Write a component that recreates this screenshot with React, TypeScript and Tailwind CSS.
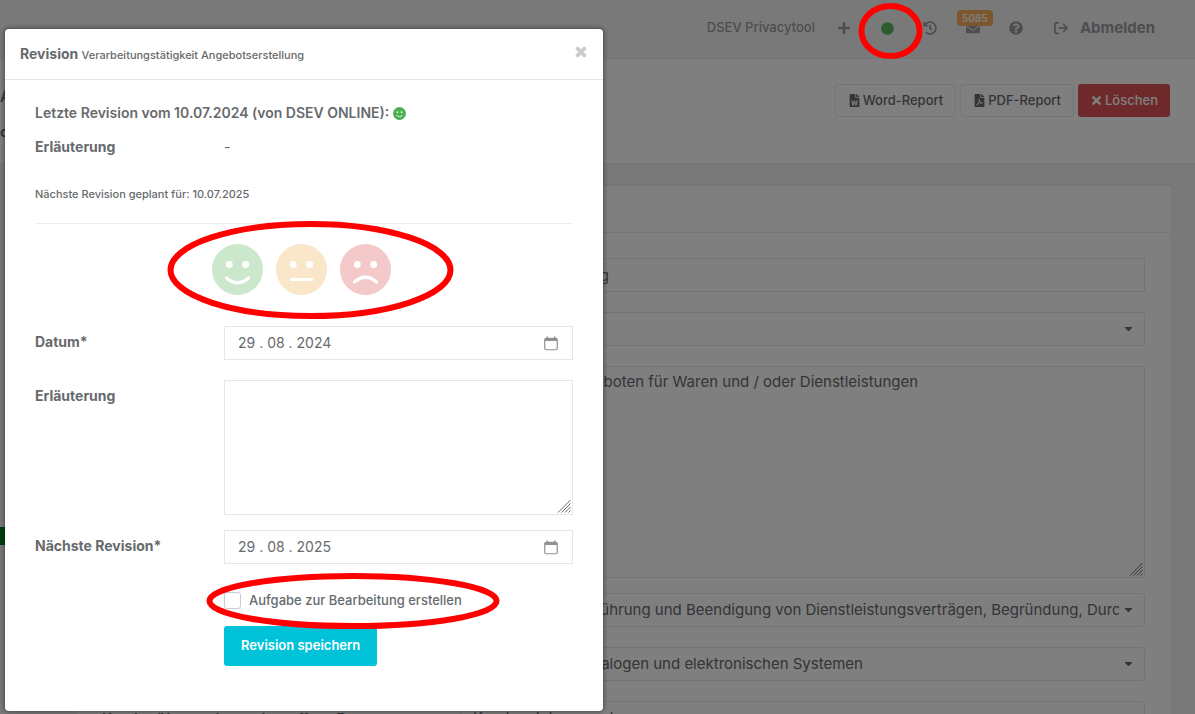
import { useState, FormEvent, ReactNode } from "react";
import {
    FaPlus,
    FaCircle,
    FaHistory,
    FaEnvelope,
    FaQuestionCircle,
    FaFileWord,
    FaFilePdf,
    FaTimes,
    FaCaretDown
} from "react-icons/fa";
import { FaArrowRightFromBracket } from "react-icons/fa6";

type Mood = "good" | "neutral" | "bad";

const MOUTHS: { [key in Mood]: string } = {
    good: "M14.5 34 Q25.5 43.5 36.5 34",
    neutral: "M15.5 35.5 H35.5",
    bad: "M14.5 38 Q25.5 28.5 36.5 38"
};

const MOODS: { id: Mood; label: string; color: string }[] = [
    { id: "good", label: "Gut", color: "text-[#cbe8cc]" },
    { id: "neutral", label: "Neutral", color: "text-[#fae6c8]" },
    { id: "bad", label: "Schlecht", color: "text-[#f3c9c9]" }
];

function Face({ mood, className }: { mood: Mood; className: string }) {
    return (
        <svg viewBox="0 0 51 51" className={className} aria-hidden="true">
            <circle cx="25.5" cy="25.5" r="25.5" fill="currentColor" />
            <circle cx="17.3" cy="20.5" r="3.4" fill="#fff" />
            <circle cx="33.7" cy="20.5" r="3.4" fill="#fff" />
            <path d={MOUTHS[mood]} fill="none" stroke="#fff" strokeWidth="3.2" strokeLinecap="round" />
        </svg>
    );
}

function Grip() {
    return (
        <svg viewBox="0 0 14 14" className="pointer-events-none absolute right-[2px] bottom-[2px] size-[14px]" aria-hidden="true">
            <path d="M1 13.5L13.5 1M4.5 13.5L13.5 4.5M8 13.5L13.5 8M11.5 13.5L13.5 11.5" fill="none" stroke="currentColor" strokeWidth="1" />
        </svg>
    );
}

function IconButton({ label, children }: { label: string; children: ReactNode }) {
    return (
        <button type="button" aria-label={label} className="relative flex h-8 w-[43px] items-center justify-center">
            {children}
        </button>
    );
}

function TopBar() {
    return (
        <header className="flex h-[59px] items-center justify-end border-b border-[#e7eaec] bg-[#f3f3f4] pr-10 pb-[2px] text-[#999c9e]">
            <span className="mr-2 text-[13px] font-medium">DSEV Privacytool</span>
            <IconButton label="Neu"><FaPlus size={14} /></IconButton>
            <IconButton label="Status"><FaCircle size={13} className="text-[#5cb85c]" /></IconButton>
            <IconButton label="Verlauf"><FaHistory size={14} /></IconButton>
            <IconButton label="Nachrichten">
                <FaEnvelope size={14} />
                <span className="absolute -top-[2px] left-[5px] rounded-sm bg-[#f8ac59] px-[5px] text-[10px] leading-4 font-semibold text-white">
                    5085
                </span>
            </IconButton>
            <IconButton label="Hilfe"><FaQuestionCircle size={14} /></IconButton>
            <a href="#logout" className="ml-4 flex items-center gap-3 text-[15px] font-bold">
                <FaArrowRightFromBracket size={14} />
                Abmelden
            </a>
        </header>
    );
}

function PageHeading() {
    return (
        <section className="flex h-[105px] items-start justify-between border-b border-[#e7eaec] bg-white pt-[25px] pr-[25px]">
            <div>
                <h1 className="text-base leading-6 font-medium">Angebotserstellung</h1>
                <p className="mt-[14px] text-sm font-bold">offen</p>
            </div>
            <div className="flex gap-1 text-[13px] font-medium">
                <button type="button" className="flex h-[33px] items-center gap-[2px] rounded-[3px] border border-[#e7eaec] px-3">
                    <FaFileWord size={13} />Word-Report
                </button>
                <button type="button" className="flex h-[33px] items-center gap-[2px] rounded-[3px] border border-[#e7eaec] px-3">
                    <FaFilePdf size={13} />PDF-Report
                </button>
                <button type="button" className="flex h-[33px] items-center gap-[2px] rounded-[3px] bg-[#dc5454] px-3 text-white">
                    <FaTimes size={13} />Löschen
                </button>
            </div>
        </section>
    );
}

function Row({ id, label, children }: { id: string; label: string; children: ReactNode }) {
    return (
        <div className="grid grid-cols-[358px_1fr] items-start">
            <label htmlFor={id} className="pt-2 text-sm font-bold">{label}</label>
            {children}
        </div>
    );
}

function SelectField({ id, options }: { id: string; options: string[] }) {
    return (
        <div className="relative">
            <select
                id={id}
                className="h-[34px] w-full appearance-none rounded-[3px] border border-[#e5e6e7] bg-white pr-[25px] pl-3 text-[15px]"
            >
                {options.map((option) => (
                    <option key={option}>{option}</option>
                ))}
            </select>
            <FaCaretDown size={13} className="pointer-events-none absolute top-[10px] right-[10px]" />
        </div>
    );
}

function ActivityForm() {
    return (
        <main className="flex bg-[#f3f3f4] pt-5 pr-[25px]">
            <nav aria-label="Bereiche" className="w-[77px] shrink-0 pt-[343px]">
                <a href="#bereich" aria-label="Bereich" className="block h-[18px] w-[52px] bg-[#00802a]"></a>
            </nav>
            <form className="grow border-t-2 border-[#e7eaec] bg-white">
                <div className="h-[47px] border-b border-[#e7eaec]"></div>
                <div className="flex flex-col gap-5 p-[25px]">
                    <Row id="name" label="Bezeichnung">
                        <input
                            id="name"
                            type="text"
                            defaultValue="Angebotserstellung"
                            className="h-[34px] w-full border border-[#e5e6e7] px-[10px] text-[15px]"
                        />
                    </Row>
                    <Row id="category" label="Kategorie">
                        <SelectField id="category" options={[""]} />
                    </Row>
                    <div className="-mb-[5px]">
                        <Row id="description" label="Beschreibung">
                            <div className="relative">
                                <textarea
                                    id="description"
                                    defaultValue="Erstellen von Angeboten für Waren und / oder Dienstleistungen"
                                    className="block h-[212px] w-full resize-none border border-[#e5e6e7] px-[10px] py-1 text-[15px]"
                                />
                                <Grip />
                            </div>
                        </Row>
                    </div>
                    <Row id="purpose" label="Zweck">
                        <SelectField
                            id="purpose"
                            options={["Gründung, Durchführung und Beendigung von Dienstleistungsverträgen, Begründung, Durchführung und Beendigung"]}
                        />
                    </Row>
                    <Row id="storage" label="Art der Verarbeitung">
                        <SelectField id="storage" options={["Speicherung in analogen und elektronischen Systemen"]} />
                    </Row>
                    <Row id="persons" label="Kunden/Unternehmen, betroffene Personen">
                        <SelectField id="persons" options={["Kunden, Interessenten"]} />
                    </Row>
                </div>
            </form>
        </main>
    );
}

function DateField({ id, value, onChange }: { id: string; value: string; onChange: (value: string) => void }) {
    return (
        <div className="flex h-[34px] items-center border border-[#e5e6e7] pr-[14px] pl-[13px]">
            <input
                id={id}
                type="text"
                value={value}
                onChange={(event) => onChange(event.target.value)}
                className="min-w-0 grow text-sm outline-none"
            />
            <button type="button" aria-label="Kalender öffnen" className="text-[#8e9092]">
                <svg viewBox="0 0 14 15" className="h-[15px] w-[14px]" aria-hidden="true">
                    <rect x="0.75" y="2.25" width="12.5" height="11.5" rx="1.5" fill="none" stroke="currentColor" strokeWidth="1.2" />
                    <path d="M1 2h12v3H1zM2.5 0.5h1.5v2H2.5zM10 0.5h1.5v2H10z" fill="currentColor" />
                </svg>
            </button>
        </div>
    );
}

function RevisionDialog() {
    const [mood, setMood] = useState<Mood | null>(null);
    const [payload, setPayload] = useState<{
        date: string;
        note: string;
        next: string;
        createTask: boolean;
    }>({
        date: "29 . 08 . 2024",
        note: "",
        next: "29 . 08 . 2025",
        createTask: false
    });

    const onSubmit = (event: FormEvent<HTMLFormElement>) => {
        event.preventDefault();
    };

    return (
        <div
            role="dialog"
            aria-labelledby="revision-title"
            className="w-[598px] max-w-full rounded-[4px] bg-white pb-[45px] shadow-[0_0_4px_1px_rgba(0,0,0,0.4)]"
        >
            <div className="flex h-[51px] items-center justify-between border-b border-[#e5e5e5] px-[15px]">
                <h2 id="revision-title" className="text-sm font-bold">
                    Revision <small className="text-[11px] font-medium">Verarbeitungstätigkeit Angebotserstellung</small>
                </h2>
                <button type="button" aria-label="Schließen" className="pb-1 text-[#cccccc]">
                    <FaTimes size={14} stroke="currentColor" strokeWidth={40} />
                </button>
            </div>
            <form className="px-[30px] pt-[23px]" onSubmit={onSubmit}>
                <h3 className="flex items-center gap-1 text-sm font-semibold">
                    Letzte Revision vom 10.07.2024 (von DSEV ONLINE):
                    <Face mood="good" className="size-[13px] text-[#4caf50]" />
                </h3>
                <dl className="mt-[14px] grid grid-cols-[189px_1fr] text-sm">
                    <dt className="font-bold">Erläuterung</dt>
                    <dd>-</dd>
                </dl>
                <p className="mt-[29px] text-[11px] leading-4 font-medium">Nächste Revision geplant für: 10.07.2025</p>
                <hr className="mt-[21px] border-[#eeeeee]" />
                <div className="mt-5 flex justify-center gap-[13px] pr-[6px]">
                    {MOODS.map(({ id, label, color }) => (
                        <button
                            key={id}
                            type="button"
                            aria-label={label}
                            aria-pressed={mood === id}
                            onClick={() => setMood(id)}
                            className={color}
                        >
                            <Face mood={id} className="size-[51px]" />
                        </button>
                    ))}
                </div>
                <div className="mt-[31px] grid grid-cols-[189px_1fr]">
                    <label htmlFor="date" className="pt-[6px] text-sm font-bold">Datum*</label>
                    <DateField id="date" value={payload.date} onChange={(date) => setPayload({ ...payload, date })} />
                </div>
                <div className="mt-5 grid grid-cols-[189px_1fr]">
                    <label htmlFor="note" className="pt-[6px] text-sm font-bold">Erläuterung</label>
                    <div className="relative">
                        <textarea
                            id="note"
                            value={payload.note}
                            onChange={(event) => setPayload({ ...payload, note: event.target.value })}
                            className="block h-[135px] w-full resize-none border border-[#e5e6e7] px-3 py-1 text-sm"
                        />
                        <Grip />
                    </div>
                </div>
                <div className="mt-[15px] grid grid-cols-[189px_1fr]">
                    <label htmlFor="next" className="pt-[6px] text-sm font-bold">Nächste Revision*</label>
                    <DateField id="next" value={payload.next} onChange={(next) => setPayload({ ...payload, next })} />
                </div>
                <div className="mt-[26px] pl-[189px]">
                    <label className="flex items-center gap-2 text-[13px] leading-5 font-medium">
                        <input
                            type="checkbox"
                            checked={payload.createTask}
                            onChange={(event) => setPayload({ ...payload, createTask: event.target.checked })}
                            className="size-[17px] appearance-none rounded-[3px] border border-[#cccccc] checked:bg-[#00c3d9]"
                        />
                        Aufgabe zur Bearbeitung erstellen
                    </label>
                    <button type="submit" className="mt-4 h-10 rounded-[3px] bg-[#00c3d9] px-[17px] text-[13px] font-semibold text-white">
                        Revision speichern
                    </button>
                </div>
            </form>
        </div>
    );
}

function Markers() {
    return (
        <svg className="pointer-events-none absolute top-0 left-0 h-[714px] w-[1195px]" fill="none" stroke="#ff0000" strokeWidth="6" aria-hidden="true">
            <ellipse cx="890.5" cy="31" rx="29" ry="25" />
            <ellipse cx="310.5" cy="270" rx="140" ry="46" />
            <ellipse cx="353" cy="601" rx="143.5" ry="25" />
        </svg>
    );
}

export default function App() {
    return (
        <div className="relative h-screen overflow-hidden font-[Inter,sans-serif] text-[#676a6c]">
            <TopBar />
            <PageHeading />
            <ActivityForm />
            <div className="absolute inset-0 bg-black/50 pt-[29px] pl-[5px]">
                <RevisionDialog />
            </div>
            <Markers />
        </div>
    );
}
